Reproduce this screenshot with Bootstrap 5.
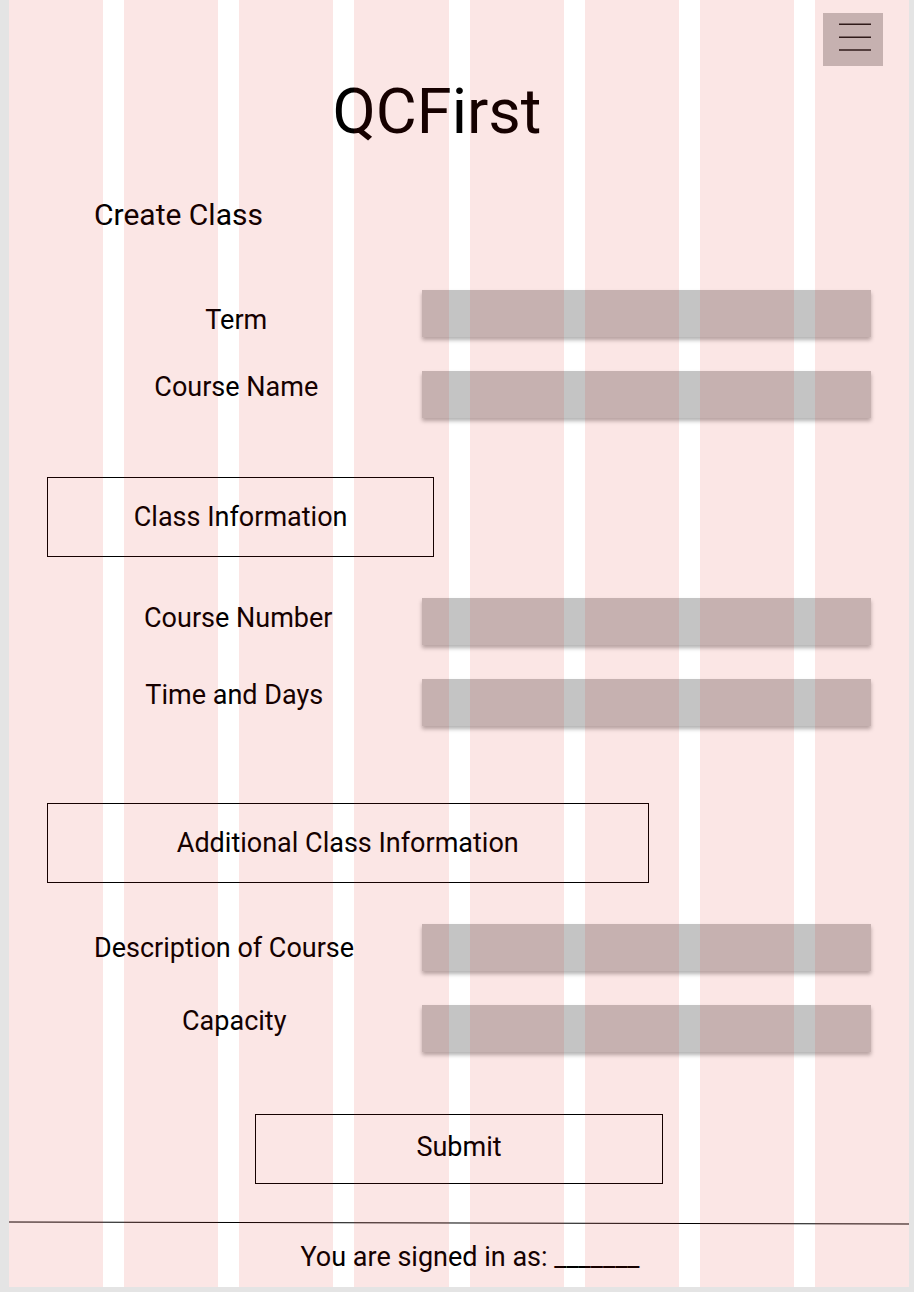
<!DOCTYPE html>
<html lang="en">
<head>
<meta charset="utf-8">
<meta name="viewport" content="width=device-width, initial-scale=1">
<title>QCFirst - Create Class</title>
<link href="https://cdn.jsdelivr.net/npm/bootstrap@5.3.0/dist/css/bootstrap.min.css" rel="stylesheet">
<style>
  body { background: #e4e4e4; color: #000; font-family: Roboto, sans-serif; font-size: 27px; line-height: 32px; }
  .canvas { background: #fff; margin: 0 5px 4px 9px; }
  /* tinted column guides lying over the whole page */
  .guides { display: grid; grid-template-columns: repeat(8, 1fr); column-gap: 21px; pointer-events: none; }
  .guides span { background: rgba(220, 10, 0, .1); }
  .menu-bar { padding: 13px 26px 0 0; }
  .menu-btn { width: 60px; height: 53px; background: #c4c4c4; padding: 0 0 6px 4px; }
  .inset { padding-left: 38px; padding-right: 38px; }
  .brand { font-size: 63px; line-height: 64px; margin-top: 14px; padding-right: 44px; }
  .page-title { font-size: 30px; line-height: 36px; margin: 53px 0 57px; padding-left: 47px; }
  .fields { display: grid; row-gap: 34px; }
  .field-row { display: grid; grid-template-columns: 5fr 6fr; }
  .field-row .form-control { height: 47px; background: #c4c4c4; box-shadow: 0 3px 4px rgba(0, 0, 0, .3); font-size: 24px; }
  .label-start { padding-left: 47px; }
  .label-low { padding-top: 12px; }
  .boxed { border: 1px solid #000; height: 80px; font-size: 27px; line-height: 32px; }
  .box-half { width: 47%; margin: 59px 0 41px; }
  .box-wide { width: 73%; margin: 77px 0 41px; }
  .submit-btn { width: 408px; max-width: 100%; height: 70px; margin: 62px 0 37px; color: #000; }
  .signed { padding: 16px 0 14px 22px; }
</style>
</head>
<body>
<div class="canvas position-relative">
  <header>
    <nav class="menu-bar d-flex justify-content-end" aria-label="Main">
      <button type="button" class="menu-btn btn rounded-0 border-0 d-flex align-items-center justify-content-center" aria-label="Menu">
        <svg width="32" height="28" viewBox="0 0 32 28" stroke="#000" stroke-opacity=".85" stroke-width="1.4" aria-hidden="true"><path d="M0 1.2H32M0 14.2H32M0 27H32"/></svg>
      </button>
    </nav>
    <div class="inset">
      <h1 class="brand fw-normal text-center mb-0">QCFirst</h1>
    </div>
  </header>

  <main class="inset">
    <h2 class="page-title fw-normal">Create Class</h2>
    <form>
      <div class="fields">
        <div class="field-row align-items-center">
          <label for="term" class="text-center label-low ps-1">Term</label>
          <input id="term" class="form-control rounded-0 border-0">
        </div>
        <div class="field-row align-items-start">
          <label for="cname" class="text-center ps-1">Course Name</label>
          <input id="cname" class="form-control rounded-0 border-0">
        </div>
      </div>

      <h3 class="boxed box-half fw-normal d-flex align-items-center justify-content-center">Class Information</h3>
      <div class="fields">
        <div class="field-row align-items-start">
          <label for="cnum" class="text-center pt-1 ps-2">Course Number</label>
          <input id="cnum" class="form-control rounded-0 border-0">
        </div>
        <div class="field-row align-items-start">
          <label for="time" class="text-center">Time and Days</label>
          <input id="time" class="form-control rounded-0 border-0">
        </div>
      </div>

      <h3 class="boxed box-wide fw-normal d-flex align-items-center justify-content-center">Additional Class Information</h3>
      <div class="fields">
        <div class="field-row align-items-center">
          <label for="desc" class="label-start">Description of Course</label>
          <input id="desc" class="form-control rounded-0 border-0">
        </div>
        <div class="field-row align-items-start">
          <label for="cap" class="text-center">Capacity</label>
          <input id="cap" class="form-control rounded-0 border-0">
        </div>
      </div>

      <div class="d-flex justify-content-center">
        <button type="submit" class="submit-btn boxed btn rounded-0 pt-1 pb-2">Submit</button>
      </div>
    </form>
  </main>

  <footer>
    <svg class="d-block w-100" height="4" viewBox="0 0 900 4" preserveAspectRatio="none" aria-hidden="true"><path d="M0 1L900 3" stroke="#000"/></svg>
    <p class="signed text-center mb-0">You are signed in as: _______</p>
  </footer>

  <div class="guides position-absolute top-0 start-0 w-100 h-100" aria-hidden="true">
    <span></span><span></span><span></span><span></span><span></span><span></span><span></span><span></span>
  </div>
</div>
<script src="https://cdn.jsdelivr.net/npm/bootstrap@5.3.0/dist/js/bootstrap.bundle.min.js"></script>
</body>
</html>
